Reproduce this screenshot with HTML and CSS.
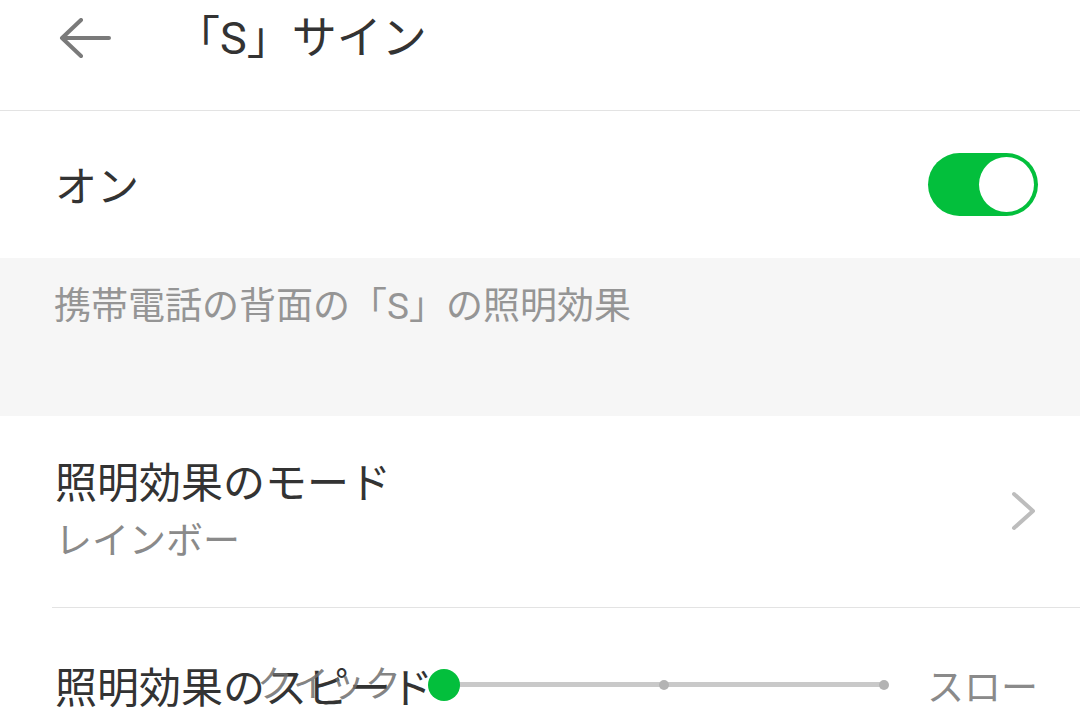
FILE: index.html
```html
<!DOCTYPE html>
<html lang="ja">
<head>
    <meta charset="UTF-8">
    <title>「S」サイン</title>
    <link rel="stylesheet" href="styles.css">
</head>
<body>
    <header class="top-bar">
        <span class="back">
            <svg width="54" height="40" viewBox="0 0 54 40">
                <path d="M24 2 L5 20 L24 38 M5 20 H52" fill="none" stroke="#7a7a7a" stroke-width="4" stroke-linecap="round" stroke-linejoin="round"/>
            </svg>
        </span>
        <h1 class="title">「S」サイン</h1>
    </header>

    <div class="row row-switch">
        <span class="label">オン</span>
        <span class="toggle"><span class="knob"></span></span>
    </div>

    <div class="note">携帯電話の背面の「S」の照明効果</div>

    <div class="row row-mode">
        <div class="mode-text">
            <div class="label">照明効果のモード</div>
            <div class="sub">レインボー</div>
        </div>
        <svg class="chevron" width="28" height="40" viewBox="0 0 28 40">
            <path d="M4 3 L23 20 L4 37" fill="none" stroke="#bdbdbd" stroke-width="4" stroke-linecap="round" stroke-linejoin="round"/>
        </svg>
    </div>

    <div class="row row-speed">
        <span class="label">照明効果のスピード</span>
        <div class="slider">
            <span class="slider-min">クイック</span>
            <div class="track">
                <span class="dot dot-mid"></span>
                <span class="dot dot-end"></span>
                <span class="thumb"></span>
            </div>
            <span class="slider-max">スロー</span>
        </div>
    </div>
</body>
</html>
```

FILE: styles.css
```css
body {
    margin: 0;
    padding: 0;
    background-color: #fff;
    color: #333;
    font-family: Roboto, "Noto Sans CJK JP", sans-serif;
    width: 1080px;
    height: 724px;
    overflow: hidden;
}

.top-bar {
    height: 111px;
    border-bottom: 1px solid #e3e3e3;
    display: flex;
    align-items: flex-start;
    padding-left: 57px;
    box-sizing: border-box;
}

.back {
    margin-top: 18px;
    display: flex;
}

.title {
    margin: 0 0 0 64px;
    font-size: 45px;
    font-weight: 400;
    line-height: 78px;
    color: #333;
}

.row {
    display: flex;
    align-items: center;
    padding: 0 42px 0 55px;
}

.label {
    font-size: 42px;
    color: #333;
}

.row-switch {
    height: 147px;
    justify-content: space-between;
}

.row-switch .label {
    margin-top: -2px;
}

.toggle {
    width: 110px;
    height: 63px;
    border-radius: 32px;
    background-color: #03bf3c;
    position: relative;
}

.knob {
    position: absolute;
    right: 4px;
    top: 4px;
    width: 55px;
    height: 55px;
    border-radius: 50%;
    background-color: #fff;
}

.note {
    background-color: #f6f6f6;
    height: 158px;
    padding: 22px 0 0 54px;
    box-sizing: border-box;
    font-size: 37px;
    line-height: 54px;
    color: #959595;
}

.row-mode {
    height: 191px;
    justify-content: space-between;
    border-bottom: 1px solid #e3e3e3;
    margin-left: 52px;
    padding-left: 3px;
}

.mode-text {
    align-self: flex-start;
    padding-top: 40px;
}

.mode-text .label {
    line-height: 56px;
}

.sub {
    font-size: 37px;
    color: #8a8a8a;
    line-height: 60px;
}

.chevron {
    margin-top: -2px;
}

.row-speed {
    height: 160px;
    align-items: flex-start;
    padding-top: 50px;
    box-sizing: border-box;
}

.row-speed .label {
    line-height: 62px;
    white-space: nowrap;
}

.slider {
    display: flex;
    align-items: center;
    margin-left: -5px;
    height: 62px;
    position: relative;
    flex: 1;
}

.slider-min {
    position: absolute;
    left: -171px;
    top: -4px;
    font-size: 36px;
    line-height: 62px;
    color: rgba(110, 110, 110, 0.85);
}

.track {
    width: 441px;
    height: 5px;
    background-color: #c9c9c9;
    position: relative;
    margin-left: 16px;
    margin-top: -9px;
}

.dot {
    position: absolute;
    top: -2.5px;
    width: 10px;
    height: 10px;
    border-radius: 50%;
    background-color: #b3b3b3;
}

.dot-mid {
    left: 215px;
}

.dot-end {
    right: -4px;
}

.thumb {
    position: absolute;
    left: -16px;
    top: -13.5px;
    width: 32px;
    height: 32px;
    border-radius: 50%;
    background-color: #03bf3c;
}

.slider-max {
    margin-left: 42px;
    margin-top: -8px;
    font-size: 37px;
    color: #8a8a8a;
}
```
